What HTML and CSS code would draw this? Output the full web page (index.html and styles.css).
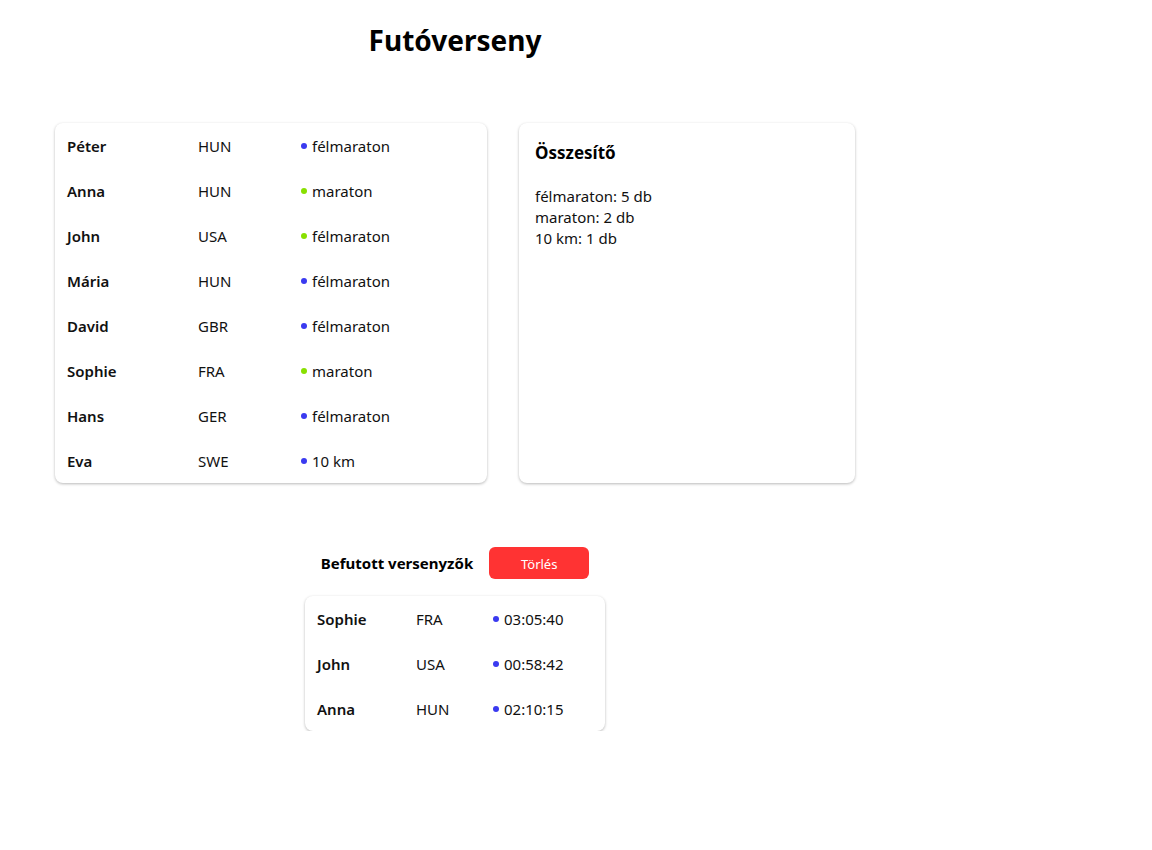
FILE: index.html
```html
<!DOCTYPE html>
<html lang="hu">
<head>
<meta charset="utf-8">
<title>Futóverseny</title>
<link rel="stylesheet" href="styles.css">
</head>
<body>
<div class="page">
  <h1 class="title">Futóverseny</h1>
  <div class="top">
    <div class="card runners">
      <div class="row"><span class="name">Péter</span><span class="country">HUN</span><span class="val"><i class="dot blue"></i>félmaraton</span></div>
      <div class="row"><span class="name">Anna</span><span class="country">HUN</span><span class="val"><i class="dot green"></i>maraton</span></div>
      <div class="row"><span class="name">John</span><span class="country">USA</span><span class="val"><i class="dot green"></i>félmaraton</span></div>
      <div class="row"><span class="name">Mária</span><span class="country">HUN</span><span class="val"><i class="dot blue"></i>félmaraton</span></div>
      <div class="row"><span class="name">David</span><span class="country">GBR</span><span class="val"><i class="dot blue"></i>félmaraton</span></div>
      <div class="row"><span class="name">Sophie</span><span class="country">FRA</span><span class="val"><i class="dot green"></i>maraton</span></div>
      <div class="row"><span class="name">Hans</span><span class="country">GER</span><span class="val"><i class="dot blue"></i>félmaraton</span></div>
      <div class="row"><span class="name">Eva</span><span class="country">SWE</span><span class="val"><i class="dot blue"></i>10 km</span></div>
    </div>
    <div class="card summary">
      <h2 class="summary-title">Összesítő</h2>
      <div class="summary-lines">
        <div>félmaraton: 5 db</div>
        <div>maraton: 2 db</div>
        <div>10 km: 1 db</div>
      </div>
    </div>
  </div>
  <div class="finished">
    <div class="finished-head">
      <span class="finished-title">Befutott versenyzők</span>
      <button class="btn-delete">Törlés</button>
    </div>
    <div class="card finishers">
      <div class="row"><span class="name">Sophie</span><span class="country">FRA</span><span class="val"><i class="dot blue"></i>03:05:40</span></div>
      <div class="row"><span class="name">John</span><span class="country">USA</span><span class="val"><i class="dot blue"></i>00:58:42</span></div>
      <div class="row"><span class="name">Anna</span><span class="country">HUN</span><span class="val"><i class="dot blue"></i>02:10:15</span></div>
    </div>
  </div>
</div>
</body>
</html>
```
FILE: styles.css
```css
* { box-sizing: border-box; }
html, body { margin: 0; padding: 0; background: #fff; }
body {
  font-family: "Noto Sans", "Open Sans", sans-serif;
  font-size: 15px;
  color: #111;
}
.page {
  width: 800px;
  margin-left: 55px;
  padding-top: 20px;
}
.title {
  margin: 0;
  text-align: center;
  font-size: 28px;
  font-weight: 700;
  line-height: 40px;
  color: #000;
}
.top {
  display: flex;
  gap: 32px;
  margin-top: 63px;
}
.card {
  background: #fff;
  border-radius: 8px;
  box-shadow: 0 1px 3px rgba(0,0,0,0.28);
}
.runners { width: 432px; padding: 0 12px; }
.summary { width: 336px; padding: 18px 16px; }
.row {
  display: grid;
  height: 45px;
  align-items: center;
}
.runners .row { grid-template-columns: 131px 103px 1fr; }
.finishers .row { grid-template-columns: 99px 77px 1fr; }
.name { font-weight: 600; color: #111; }
.val { display: flex; align-items: center; }
.dot {
  display: inline-block;
  width: 6px;
  height: 6px;
  border-radius: 50%;
  margin-right: 5px;
}
.dot.blue { background: #3a3af0; }
.dot.green { background: #88e000; }
.summary-title {
  margin: 0;
  font-size: 17px;
  font-weight: 700;
  line-height: 24px;
  color: #000;
}
.summary-lines {
  margin-top: 21px;
  line-height: 21px;
}
.finished {
  margin-top: 64px;
  display: flex;
  flex-direction: column;
  align-items: center;
}
.finished-head {
  display: flex;
  align-items: center;
  gap: 16px;
  height: 32px;
}
.finished-title { font-weight: 700; color: #000; }
.btn-delete {
  width: 100px;
  height: 32px;
  border: none;
  border-radius: 6px;
  background: #ff3333;
  color: #fff;
  font-family: inherit;
  font-size: 13px;
  padding-top: 2px;
}
.finishers {
  width: 300px;
  padding: 0 12px;
  margin-top: 17px;
}
```
